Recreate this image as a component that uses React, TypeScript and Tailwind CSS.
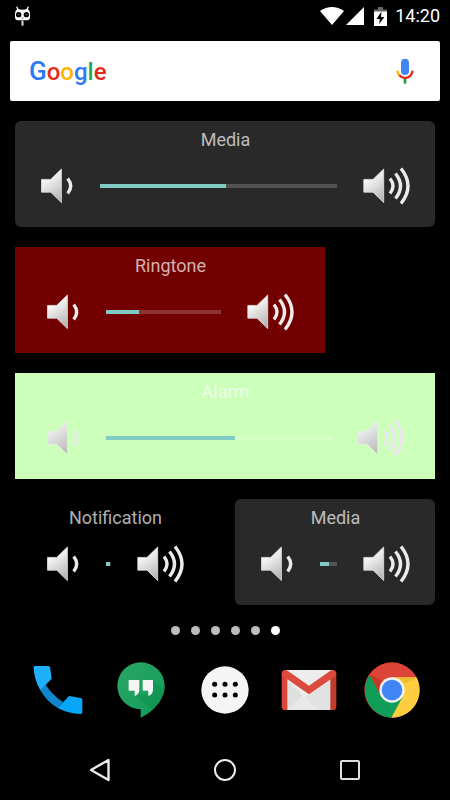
import clsx from "clsx";

interface VolumeWidgetProps {
  title: string;
  level: number;
  max: number;
  className: string;
  faded?: boolean;
}

function SpeakerIcon({ loud = false, faded = false }: { loud?: boolean; faded?: boolean }) {
  const id = `speaker-${loud ? "loud" : "quiet"}-${faded ? "faded" : "solid"}`;
  const wave = faded ? "#ebe6ee" : "#ebebeb";

  return (
    <svg
      width={loud ? 48 : 34}
      height={38}
      viewBox={loud ? "0 0 48 38" : "-0.7 0 34 38"}
      fill="none"
      aria-hidden="true"
    >
      <defs>
        <linearGradient id={id} x1="0.3" y1="0" x2="0.7" y2="1">
          <stop offset="0.2" stopColor={faded ? "#ededed" : "#fafafa"} />
          <stop offset="1" stopColor={faded ? "#bcbcbc" : "#b4b4b4"} />
        </linearGradient>
      </defs>
      <path
        d="M.8 12.4H10L20.7 2v33.6L10 25.2H.8z"
        fill={`url(#${id})`}
        stroke={faded ? "#ece9ee" : "#e2e2e2"}
        strokeWidth="0.8"
      />
      <g stroke={wave} strokeWidth="3.400">
        <path d="M27 11.500q6 7.500 0 15" />
        {loud && <path d="M32.500 6.500q10 12.500 0 25" />}
        {loud && <path d="M38 1.500q14 17.500 0 35" />}
      </g>
    </svg>
  );
}

function VolumeWidget({ title, level, max, className, faded }: VolumeWidgetProps) {
  const percent = (level / max) * 100;

  return (
    <section className={clsx("h-[106px] pt-[7px]", className)}>
      <h2 className="text-center text-[18px] leading-6 text-white/70">{title}</h2>
      <div className="mt-[15px] flex items-center">
        <button type="button" aria-label={`${title} volume down`} className="shrink-0">
          <SpeakerIcon faded={faded} />
        </button>
        <input
          type="range"
          aria-label={`${title} volume`}
          min={0}
          max={max}
          defaultValue={level}
          className="mr-[26px] ml-[26px] h-1 min-w-0 flex-1 appearance-none bg-white/20 [&::-webkit-slider-thumb]:h-0 [&::-webkit-slider-thumb]:w-0 [&::-webkit-slider-thumb]:appearance-none"
          style={{
            backgroundImage: `linear-gradient(to right, #80cbc4 ${percent}%, transparent ${percent}%)`,
          }}
        />
        <button type="button" aria-label={`${title} volume up`} className="shrink-0">
          <SpeakerIcon loud faded={faded} />
        </button>
      </div>
    </section>
  );
}

function StatusBar() {
  return (
    <header className="flex h-8 items-center pr-[10px] pl-[14px] text-white">
      <svg width="17" height="20" viewBox="0 0 51 60" fill="none" aria-hidden="true">
        <path d="M8 2l5 11M43 2l-5 11" stroke="#fff" strokeWidth="4" />
        <path
          d="M10 8Q25 14 41 8Q48 13 48 24V34Q48 43 39 43H12Q3 43 3 34V24Q3 13 10 8z"
          fill="#fff"
        />
        <circle cx="14" cy="26" r="8" fill="#000" />
        <circle cx="37" cy="26" r="8" fill="#000" />
        <circle cx="14" cy="26" r="2" fill="#888" />
        <circle cx="37" cy="26" r="2" fill="#888" />
        <path d="M22 36h7" stroke="#555" strokeWidth="2" />
        <path d="M25.500 44v15" stroke="#ddd" strokeWidth="6" />
      </svg>
      <svg width="24" height="18" viewBox="0 0 24 18" className="ml-auto" aria-hidden="true">
        <path d="M0 4Q12-4 24 4L12 18z" fill="#fff" />
      </svg>
      <svg width="18" height="18" viewBox="0 0 18 18" className="ml-[2px]" aria-hidden="true">
        <path d="M18 0v18H0z" fill="#fff" />
      </svg>
      <svg width="13" height="19" viewBox="0 0 13 19" className="ml-[10px]" aria-hidden="true">
        <path d="M0 5V2.500h4V0h5v2.500h4V5z" fill="#666" />
        <path d="M0 4.500h13V19H0z" fill="#fff" />
        <path d="M7.500 4.500L2.500 12h3.300L5.200 17l5.200-7H7z" fill="#000" />
      </svg>
      <time className="ml-[8px] text-[18px] leading-6">14:20</time>
    </header>
  );
}

function SearchBar() {
  return (
    <div className="mx-[10px] mt-[9px] flex h-[60px] items-center justify-between rounded-xs bg-white pr-[26px] pl-[19px]">
      <button
        type="button"
        aria-label="Google search"
        className="text-[24px] leading-8 font-medium"
      >
        <span className="text-[26px] text-[#2a7af5]">G</span>
        <span className="text-[#e62a1a]">o</span>
        <span className="text-[#fbb605]">o</span>
        <span className="text-[#2a7af5]">g</span>
        <span className="text-[#2da44e]">l</span>
        <span className="text-[#e62a1a]">e</span>
      </button>
      <button type="button" aria-label="Voice search">
        <svg width="18" height="26" viewBox="288 175 54 78" fill="none" aria-hidden="true">
          <rect x="303" y="177" width="24" height="49" rx="12" fill="#4285f4" />
          <path d="M315 236v16" stroke="#17a043" strokeWidth="8" />
          <path d="M292 213q1 9 7 15" stroke="#fbb605" strokeWidth="7" />
          <path d="M298 227q7 8 17 8q19-1 23-22" stroke="#e62a1a" strokeWidth="7" />
        </svg>
      </button>
    </div>
  );
}

function PageDots() {
  return (
    <div className="mt-[21px] flex justify-center gap-[11px]">
      {[0, 1, 2, 3, 4, 5].map((page) => (
        <button
          key={page}
          type="button"
          aria-label={`Page ${page + 1}`}
          className={clsx("size-[9px] rounded-full", page === 5 ? "bg-white" : "bg-[#bdbdbd]")}
        />
      ))}
    </div>
  );
}

function PhoneIcon() {
  return (
    <svg width="50" height="50" viewBox="38 45 150 150" aria-hidden="true">
      <path d="M60 120L76 104Q96 136 128 156L112 174Q78 154 60 120z" fill="#1186d0" />
      <path d="M44 48H84Q88 48 89 52L94 86L60 121Q41 88 40 52Q40 48 44 48z" fill="#1eb0fb" />
      <path d="M112 174L146 138L181 144Q186 145 186 149V187Q186 192 181 192Q142 191 112 174z" fill="#06a7f7" />
    </svg>
  );
}

function HangoutsIcon() {
  return (
    <svg width="48" height="56" viewBox="292 36 144 168" aria-hidden="true">
      <defs>
        <linearGradient id="hangouts" x1="0" y1="0" x2="1" y2="1">
          <stop stopColor="#2ba566" />
          <stop offset="1" stopColor="#0f9d58" />
        </linearGradient>
      </defs>
      <path
        d="M364 37A71 71 0 0 1 435 108C435 150 401 185 363 203V178A70.500 70.500 0 0 1 364 37z"
        fill="url(#hangouts)"
      />
      <path d="M400 91L434 123Q425 152 400 178L347 138L388 134z" fill="#0b8043" opacity="0.3" />
      <path
        d="M327 90H359V118Q359 133 345 138V122H327zM369 90H400V118Q400 133 386 138V122H369z"
        fill="#f5f5f5"
      />
    </svg>
  );
}

function AppsIcon() {
  return (
    <svg width="48" height="48" viewBox="33 48 144 144" aria-hidden="true">
      <circle cx="105" cy="120" r="71" fill="#f5f5f5" />
      {[74, 105, 136].map((x) => (
        <g key={x} fill="#000">
          <circle cx={x} cy="103" r="7.500" />
          <circle cx={x} cy="135" r="7.500" />
        </g>
      ))}
    </svg>
  );
}

function GmailIcon() {
  return (
    <svg width="56" height="42" viewBox="272 57 168 126" aria-hidden="true">
      <path d="M285 60H428V180H285z" fill="#ededed" />
      <path d="M291 180L356 132L421 180z" fill="#e2e2e2" />
      <path d="M291 92L384 180H291z" fill="#e8e8e8" />
      <path d="M291 92L338 138L291 176zM421 92V180L358 133z" fill="#d8d8d8" opacity="0.6" />
      <path d="M274 70L291 88V180H284Q274 180 274 170z" fill="#db4437" />
      <path d="M420 88L438 70V170Q438 180 428 180H420z" fill="#c23a2a" />
      <path
        d="M274 72Q273 60 285 60Q289 60 294 64L356 107L418 64Q423 60 428 60Q438 60 438 73Q438 76 434 79L356 133L278 79Q275 77 274 72z"
        fill="#dc4a3d"
      />
    </svg>
  );
}

function ChromeIcon() {
  return (
    <svg width="56" height="56" viewBox="521 36 168 168" aria-hidden="true">
      <circle cx="605" cy="120" r="83" fill="#db4437" />
      <path d="M605 82H678.500A83 83 0 0 1 603 203L605 120z" fill="#ffcd40" />
      <path d="M538 74A83 83 0 0 0 603 203L637 140L605 120L571 137z" fill="#0f9d58" />
      <path d="M538 74L571 137L567 126Q565 106 577 94z" fill="#a52714" opacity="0.4" />
      <path d="M626 84H677L643 101z" fill="#c79000" opacity="0.25" />
      <circle cx="605" cy="120" r="38" fill="#f1f1f1" />
      <circle cx="605" cy="120" r="31" fill="#4285f4" />
    </svg>
  );
}

const dock = [
  { name: "Phone", Icon: PhoneIcon },
  { name: "Hangouts", Icon: HangoutsIcon },
  { name: "Apps", Icon: AppsIcon },
  { name: "Gmail", Icon: GmailIcon },
  { name: "Chrome", Icon: ChromeIcon },
];

function Dock() {
  return (
    <nav aria-label="Favorites" className="mt-[26px] grid h-[58px] grid-cols-5 px-4">
      {dock.map(({ name, Icon }) => (
        <button key={name} type="button" aria-label={name} className="flex items-center justify-center">
          <Icon />
        </button>
      ))}
    </nav>
  );
}

function NavigationBar() {
  return (
    <nav aria-label="System" className="mt-[31px] grid h-[40px] grid-cols-3 px-[38px]">
      <button type="button" aria-label="Back" className="flex items-center justify-center">
        <svg width="22" height="24" viewBox="0 0 22 24" fill="none" aria-hidden="true">
          <path d="M2 12L19.500 2V22z" stroke="#ececec" strokeWidth="2.400" strokeLinejoin="round" />
        </svg>
      </button>
      <button type="button" aria-label="Home" className="flex items-center justify-center">
        <span className="size-[22px] rounded-full border-2 border-[#ececec]" />
      </button>
      <button type="button" aria-label="Recent apps" className="flex items-center justify-center">
        <span className="size-5 rounded-xs border-2 border-[#e0e0e0]" />
      </button>
    </nav>
  );
}

export default function App() {
  return (
    <div className="min-h-screen bg-black font-['Roboto',sans-serif]">
      <StatusBar />
      <SearchBar />
      <main className="mt-5 grid grid-cols-4 gap-5 px-[15px]">
        <VolumeWidget
          title="Media"
          level={8}
          max={15}
          className="col-span-4 rounded-md bg-[#292929] pr-6 pl-[25px]"
        />
        <VolumeWidget
          title="Ringtone"
          level={2}
          max={7}
          className="col-span-3 bg-[#720000] pr-[30px] pl-[31px]"
        />
        <VolumeWidget
          title="Alarm"
          level={4}
          max={7}
          faded
          className="col-span-4 bg-[#ccffba] pr-[30px] pl-[31px]"
        />
        <VolumeWidget
          title="Notification"
          level={5}
          max={7}
          className="col-span-2 pr-[30px] pl-[31px]"
        />
        <VolumeWidget
          title="Media"
          level={8}
          max={15}
          className="col-span-2 rounded-md bg-[#292929] pr-6 pl-[25px]"
        />
      </main>
      <PageDots />
      <Dock />
      <NavigationBar />
    </div>
  );
}
